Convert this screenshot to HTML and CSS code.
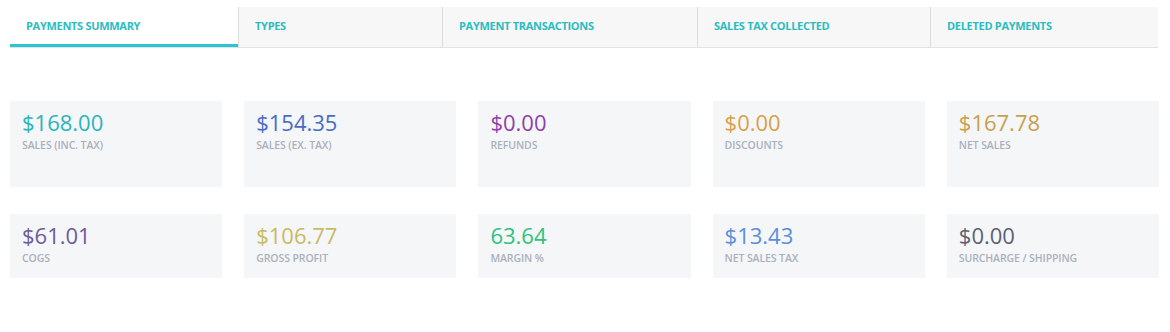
FILE: index.html
```html
<!DOCTYPE html>
<html lang="en">
<head>
<meta charset="utf-8">
<title>Payments Summary</title>
<link rel="stylesheet" href="styles.css">
</head>
<body>
<div class="page">
  <nav class="tabs">
    <div class="tab active tab-summary">Payments Summary</div>
    <div class="tab tab-types">Types</div>
    <div class="tab tab-transactions">Payment Transactions</div>
    <div class="tab tab-tax">Sales Tax Collected</div>
    <div class="tab tab-deleted">Deleted Payments</div>
  </nav>

  <section class="stats">
    <div class="card tall">
      <div class="value c-teal">$168.00</div>
      <div class="label">Sales (inc. tax)</div>
    </div>
    <div class="card tall">
      <div class="value c-blue">$154.35</div>
      <div class="label">Sales (ex. tax)</div>
    </div>
    <div class="card tall">
      <div class="value c-purple">$0.00</div>
      <div class="label">Refunds</div>
    </div>
    <div class="card tall">
      <div class="value c-gold">$0.00</div>
      <div class="label">Discounts</div>
    </div>
    <div class="card tall">
      <div class="value c-gold2">$167.78</div>
      <div class="label">Net Sales</div>
    </div>

    <div class="card">
      <div class="value c-violet">$61.01</div>
      <div class="label">COGS</div>
    </div>
    <div class="card">
      <div class="value c-olive">$106.77</div>
      <div class="label">Gross Profit</div>
    </div>
    <div class="card">
      <div class="value c-green">63.64</div>
      <div class="label">Margin %</div>
    </div>
    <div class="card">
      <div class="value c-sky">$13.43</div>
      <div class="label">Net Sales Tax</div>
    </div>
    <div class="card">
      <div class="value c-slate">$0.00</div>
      <div class="label">Surcharge / Shipping</div>
    </div>
  </section>
</div>
</body>
</html>
```

FILE: styles.css
```css
* { box-sizing: border-box; }

html, body {
  margin: 0;
  padding: 0;
  background: #ffffff;
}

body {
  font-family: "Open Sans", "Liberation Sans", sans-serif;
}

.page {
  padding: 7px 11px 0 10px;
}

.tabs {
  display: flex;
  width: 1148px;
  background: #f7f7f7;
  border-bottom: 1px solid #dce3ea;
}

.tab {
  height: 40px;
  padding: 12px 16px 14px 16px;
  font-size: 11px;
  line-height: 14px;
  font-weight: 700;
  letter-spacing: -0.3px;
  text-transform: uppercase;
  color: #2bbcbf;
  border-left: 1px solid #dcdcdc;
  white-space: nowrap;
}

.tab.active {
  background: #ffffff;
  border-left: none;
  box-shadow: inset 0 -3px 0 #2ec4cf;
}

.tab-summary { width: 228px; }
.tab-types { width: 204px; }
.tab-transactions { width: 255px; }
.tab-tax { width: 233px; }
.tab-deleted { width: 228px; }

.stats {
  display: grid;
  grid-template-columns: repeat(5, 1fr);
  column-gap: 22px;
  row-gap: 27px;
  margin-top: 53px;
}

.card {
  background: #f5f6f8;
  height: 64px;
  padding: 8px 12px 0 12px;
}

.card.tall {
  height: 86px;
}

.value {
  font-size: 22px;
  line-height: 26px;
  font-weight: 400;
}

.label {
  margin-top: 3px;
  font-size: 10.5px;
  line-height: 14px;
  font-weight: 600;
  letter-spacing: -0.1px;
  text-transform: uppercase;
  color: #aab1bd;
}

.c-teal { color: #2ab4be; }
.c-blue { color: #4a6cc4; }
.c-purple { color: #8f3fae; }
.c-gold { color: #d5a24a; }
.c-gold2 { color: #c9a04f; }
.c-violet { color: #6f5a9a; }
.c-olive { color: #c8bb62; }
.c-green { color: #2ec37f; }
.c-sky { color: #5a8fd8; }
.c-slate { color: #5b6173; }
```
